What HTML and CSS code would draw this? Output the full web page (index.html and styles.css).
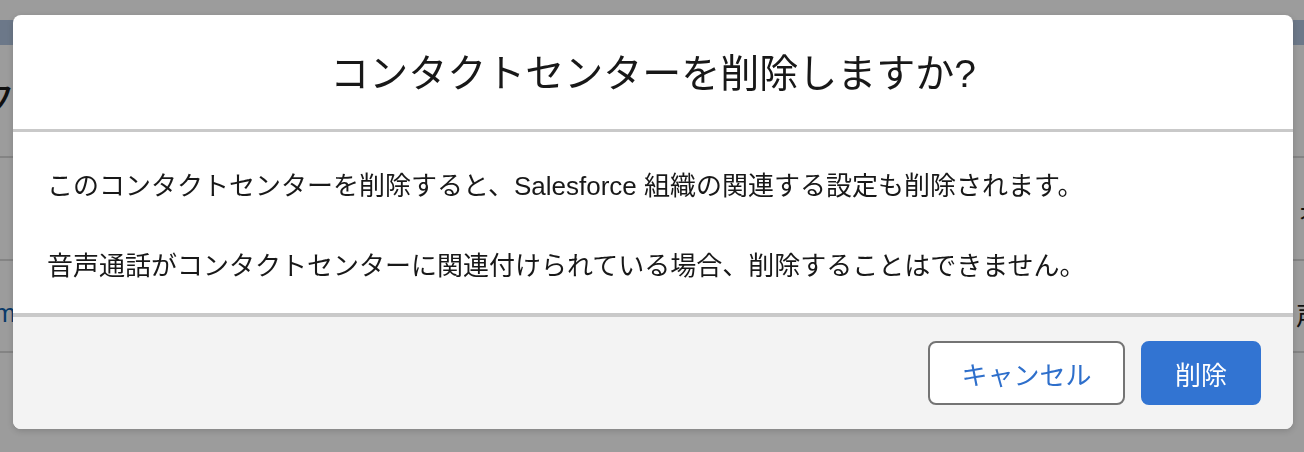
FILE: index.html
```html
<!DOCTYPE html>
<html lang="ja">
<head>
  <meta charset="UTF-8">
  <meta name="viewport" content="width=device-width, initial-scale=1.0">
  <link rel="stylesheet" href="styles.css">
</head>

<body>
  <div class="page">
    <div class="page-top"></div>
    <div class="page-strip"></div>
    <div class="page-title">ク</div>
    <div class="page-row row-a">
      <span></span>
      <span class="right-bit">ォ</span>
    </div>
    <div class="page-row row-b">
      <span class="link-bit">m</span>
      <span class="right-bit">声</span>
    </div>
    <div class="page-row row-c"></div>
  </div>

  <div class="backdrop"></div>

  <div class="modal">
    <div class="modal-header">
      <h2>コンタクトセンターを削除しますか?</h2>
    </div>
    <div class="modal-body">
      <p>このコンタクトセンターを削除すると、Salesforce 組織の関連する設定も削除されます。</p>
      <p>音声通話がコンタクトセンターに関連付けられている場合、削除することはできません。</p>
    </div>
    <div class="modal-footer">
      <button class="btn btn-neutral">キャンセル</button>
      <button class="btn btn-brand">削除</button>
    </div>
  </div>
</body>

</html>
```

FILE: styles.css
```css
body {
  margin: 0;
  width: 1304px;
  height: 452px;
  overflow: hidden;
  font-family: "Liberation Sans", "Noto Sans CJK JP", sans-serif;
  color: #181818;
  background: #fff;
}

.page {
  width: 100%;
  height: 100%;
}

.page-top {
  height: 20px;
}

.page-strip {
  height: 25px;
  background: #b0c4df;
}

.page-title {
  height: 111px;
  font-size: 42px;
  line-height: 111px;
  margin-left: -26px;
  border-bottom: 2px solid #d8d8d8;
}

.page-row {
  display: flex;
  justify-content: space-between;
  align-items: center;
  font-size: 26px;
  border-bottom: 2px solid #d8d8d8;
}

.row-a {
  height: 101px;
}

.row-b {
  height: 90px;
}

.row-c {
  height: 90px;
  border-bottom: 0;
}

.link-bit {
  color: #0b5cab;
  margin-left: -6px;
  margin-top: 14px;
}

.right-bit {
  margin-right: -18px;
}

.row-b .right-bit {
  margin-top: 14px;
}

.backdrop {
  position: fixed;
  inset: 0;
  background: rgba(8, 7, 7, 0.4);
}

.modal {
  position: fixed;
  left: 13px;
  top: 15px;
  width: 1280px;
  background: #fff;
  border-radius: 8px;
  overflow: hidden;
  box-shadow: 0 2px 6px rgba(0, 0, 0, 0.16);
}

.modal-header {
  height: 114px;
  display: flex;
  align-items: center;
  justify-content: center;
  border-bottom: 3px solid #c9c9c9;
}

.modal-header h2 {
  margin: 4px 0 0;
  font-size: 39px;
  font-weight: 400;
  line-height: 1.25;
}

.modal-body {
  padding: 34px 32px 27px 34px;
}

.modal-body p {
  margin: 0;
  font-size: 26px;
  line-height: 40px;
}

.modal-body p + p {
  margin-top: 40px;
}

.modal-footer {
  height: 116px;
  box-sizing: border-box;
  border-top: 4px solid #c9c9c9;
  background: #f3f3f3;
  display: flex;
  justify-content: flex-end;
  align-items: center;
  gap: 16px;
  padding: 0 32px 0 0;
}

.btn {
  height: 64px;
  border-radius: 8px;
  font-family: inherit;
  font-size: 26px;
  padding: 0;
}

.btn-neutral {
  width: 197px;
  background: #fff;
  color: #2e6fcb;
  border: 2px solid #747474;
}

.btn-brand {
  width: 120px;
  background: #3274d2;
  color: #fff;
  border: 2px solid #3274d2;
}
```
